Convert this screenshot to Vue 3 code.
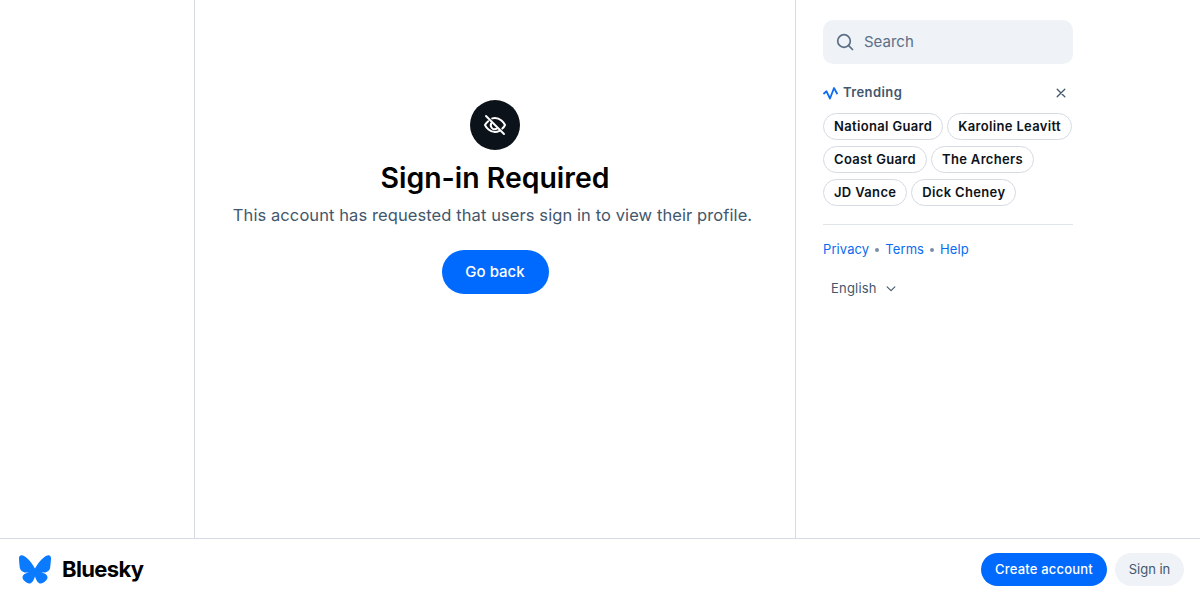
<template>
  <div class="page">
    <div class="columns">
      <div class="left-space"></div>

      <main class="center">
        <div class="error-icon">
          <svg width="24" height="24" viewBox="0 0 24 24" fill="none" stroke="#fff" stroke-width="2" stroke-linecap="round" stroke-linejoin="round">
            <path d="M5.200 8.200C3.600 9.500 2.500 11 2 12c1.200 2.600 4.900 7 10 7 1.700 0 3.200-.5 4.500-1.200" />
            <path d="M9.200 5.400c.9-.3 1.800-.4 2.800-.4 5.100 0 8.800 4.400 10 7-.5 1.100-1.400 2.400-2.700 3.600" />
            <path d="M8.300 10.300a4 4 0 0 0 5.500 5.400" />
            <path d="M3 3l18 18" />
          </svg>
        </div>
        <h1>Sign-in Required</h1>
        <p>This account has requested that users sign in to view their profile.</p>
        <button class="go-back">Go back</button>
      </main>

      <aside class="sidebar">
        <div class="search">
          <svg width="18" height="18" viewBox="0 0 18 18" fill="none" stroke="#5b6f86" stroke-width="1.700" stroke-linecap="round">
            <circle cx="8" cy="8" r="6.300" />
            <path d="M12.700 12.700l3.800 3.800" />
          </svg>
          <span>Search</span>
        </div>

        <div class="trending-head">
          <div class="trending-title">
            <svg width="15" height="14" viewBox="0 0 15 14" fill="none" stroke="#0a6cf0" stroke-width="1.800" stroke-linecap="round" stroke-linejoin="round">
              <path d="M1 7.500L3.500 5.300L7 12.500L11 2L14 7.500" />
            </svg>
            <span>Trending</span>
          </div>
          <svg class="close" width="10" height="10" viewBox="0 0 10 10" fill="none" stroke="#42576c" stroke-width="1.300" stroke-linecap="round">
            <path d="M1.200 1.200l7.600 7.600M8.800 1.200l-7.600 7.600" />
          </svg>
        </div>

        <div class="pills">
          <a v-for="topic in topics" :key="topic" class="pill">{{ topic }}</a>
        </div>

        <div class="divider"></div>

        <div class="links">
          <a>Privacy</a>
          <i></i>
          <a>Terms</a>
          <i></i>
          <a>Help</a>
        </div>

        <div class="language">
          <span>English</span>
          <svg width="10" height="6" viewBox="0 0 11 7" fill="none" stroke="#42576c" stroke-width="1.300" stroke-linecap="round" stroke-linejoin="round">
            <path d="M1 1l4.500 4.500L10 1" />
          </svg>
        </div>
      </aside>
    </div>

    <footer class="footer">
      <div class="brand">
        <svg width="32" height="29" viewBox="0 0 64 57">
          <path fill="#0a7aff" d="M13.873 3.805C21.21 9.332 29.103 20.537 32 26.55v15.882c0-.338-.13.044-.41.867-1.512 4.456-7.418 21.847-20.923 7.944-7.111-7.32-3.819-14.64 9.125-16.85-7.405 1.264-15.73-.825-18.014-9.015C1.12 23.022 0 8.51 0 6.55 0-3.268 8.579-.182 13.873 3.805ZM50.127 3.805C42.79 9.332 34.897 20.537 32 26.55v15.882c0-.338.13.044.41.867 1.512 4.456 7.418 21.847 20.923 7.944 7.111-7.32 3.819-14.64-9.125-16.85 7.405 1.264 15.73-.825 18.014-9.015C62.88 23.022 64 8.51 64 6.55c0-9.818-8.578-6.732-13.873-2.745Z" />
        </svg>
        <span>Bluesky</span>
      </div>
      <div class="actions">
        <button class="create">Create account</button>
        <button class="signin">Sign in</button>
      </div>
    </footer>
  </div>
</template>

<script setup>
const topics = [
  'National Guard',
  'Karoline Leavitt',
  'Coast Guard',
  'The Archers',
  'JD Vance',
  'Dick Cheney'
]
</script>

<style>
html, body {
  margin: 0;
  background: #fff;
}
</style>

<style scoped>
.page {
  height: 600px;
  display: flex;
  flex-direction: column;
  font-family: Inter, "Liberation Sans", sans-serif;
  overflow: hidden;
}

.columns {
  flex: 1;
  display: flex;
  min-height: 0;
}

.left-space {
  width: 194px;
}

.center {
  width: 600px;
  border-left: 1px solid #d4dbe2;
  border-right: 1px solid #d4dbe2;
  display: flex;
  flex-direction: column;
  align-items: center;
  padding-top: 100px;
}

.error-icon {
  width: 50px;
  height: 50px;
  border-radius: 50%;
  background: #0c1219;
  display: flex;
  align-items: center;
  justify-content: center;
}

h1 {
  margin: 9px 0 0;
  line-height: 37px;
  font-size: 28.400px;
  font-weight: 600;
  color: #000;
}

p {
  margin: 8px 0 0;
  padding-right: 5px;
  font-size: 16.500px;
  line-height: 22px;
  letter-spacing: 0.09px;
  color: #42576c;
}

button {
  font-family: inherit;
  border: 0;
  cursor: pointer;
}

.go-back {
  margin-top: 24px;
  height: 44px;
  width: 107px;
  padding: 0 0 2px;
  border-radius: 22px;
  background: #006aff;
  color: #fff;
  font-size: 15px;
  font-weight: 500;
}

.sidebar {
  width: 250px;
  padding: 20px 0 0 27px;
}

.search {
  height: 44px;
  border-radius: 10px;
  background: #eff2f6;
  display: flex;
  align-items: center;
  gap: 10px;
  padding-left: 13px;
  color: #5b6f86;
  font-size: 15px;
  line-height: 42px;
}

.trending-head {
  margin-top: 20px;
  height: 18px;
  display: flex;
  align-items: center;
  justify-content: space-between;
  padding-right: 7px;
}

.trending-title {
  display: flex;
  align-items: center;
  gap: 5px;
  font-size: 13px;
  line-height: 16px;
  font-weight: 600;
  letter-spacing: 0.4px;
  color: #42576c;
}

.trending-title span {
  margin-top: -2px;
}

.pills {
  margin-top: 11px;
  width: 252px;
  display: flex;
  flex-wrap: wrap;
  gap: 6px 4px;
}

.pill {
  height: 25px;
  line-height: 25px;
  padding: 0 10px;
  border: 1px solid #d4dbe2;
  border-radius: 14px;
  font-size: 13px;
  font-weight: 600;
  letter-spacing: 0.34px;
  color: #0c1219;
}

.divider {
  margin-top: 18px;
  height: 1px;
  background: #e0e5ea;
}

.links {
  margin-top: 16px;
  display: flex;
  align-items: center;
  gap: 5px;
  font-size: 13px;
  line-height: 17px;
  letter-spacing: 0.1px;
  color: #0a6cf0;
}

.links i {
  width: 4px;
  height: 4px;
  border-radius: 50%;
  background: #7b8ea3;
  margin: 0 1px;
}

.language {
  margin-top: 22px;
  padding-left: 8px;
  display: flex;
  align-items: center;
  gap: 9px;
  font-size: 13px;
  line-height: 17px;
  letter-spacing: 0.2px;
  color: #42576c;
}

.footer {
  height: 62px;
  flex-shrink: 0;
  box-sizing: border-box;
  border-top: 1px solid #d4dbe2;
  display: flex;
  align-items: center;
  justify-content: space-between;
  padding: 0 16px 0 19px;
}

.brand {
  display: flex;
  align-items: center;
  gap: 11px;
  font-size: 22px;
  line-height: 28px;
  font-weight: 700;
  letter-spacing: -0.65px;
  color: #000;
}

.brand span {
  margin-top: -1px;
}

.actions {
  display: flex;
  gap: 8px;
}

.create,
.signin {
  height: 33px;
  padding: 0 0 2px;
  border-radius: 17px;
  font-size: 13px;
  font-weight: 500;
}

.create {
  width: 126px;
  letter-spacing: 0.2px;
  background: #006aff;
  color: #fff;
}

.signin {
  width: 69px;
  background: #eff2f6;
  color: #42576c;
  font-weight: 400;
}
</style>
